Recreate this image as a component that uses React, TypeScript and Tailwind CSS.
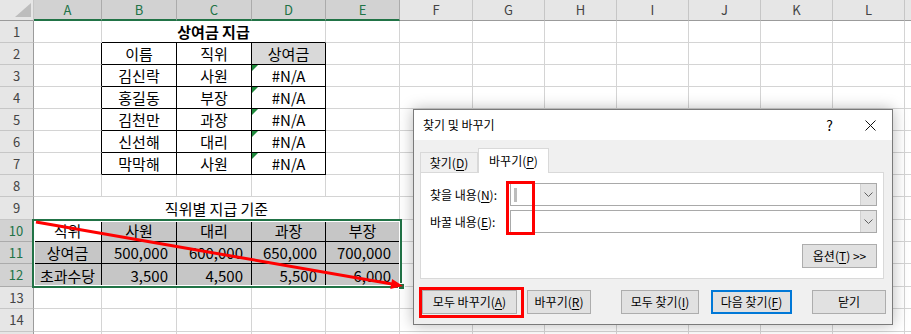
import React from 'react';

type CellSpec = {
  text?: React.ReactNode;
  span?: number;
  r?: boolean;
  b?: boolean;
  align?: 'l' | 'c' | 'r';
  bold?: boolean;
  bg?: string;
  tri?: boolean;
};

// last column (M) only shows a sliver, so it gets no letter
const LETTERS = ['A', 'B', 'C', 'D', 'E', 'F', 'G', 'H', 'I', 'J', 'K', 'L', ''];

const empty = (n: number): CellSpec[] => Array.from({ length: n }, () => ({}));

const people = [
  ['김신락', '사원'],
  ['홍길동', '부장'],
  ['김천만', '과장'],
  ['신선해', '대리'],
  ['막막해', '사원'],
];

const GRAY = 'bg-[#c6c6c6]';

const rows: CellSpec[][] = [
  [{}, { text: '상여금 지급', span: 3, b: true, bold: true, align: 'c' }, ...empty(9)],
  [
    { r: true },
    { text: '이름', r: true, b: true, align: 'c' },
    { text: '직위', r: true, b: true, align: 'c' },
    { text: '상여금', r: true, b: true, align: 'c', bg: 'bg-[#d9d9d9]' },
    ...empty(9),
  ],
  ...people.map(([name, pos]) => [
    { r: true },
    { text: name, r: true, b: true, align: 'c' },
    { text: pos, r: true, b: true, align: 'c' },
    { text: '#N/A', r: true, b: true, align: 'c', tri: true },
    ...empty(9),
  ] as CellSpec[]),
  empty(13),
  [{ text: '직위별 지급 기준', span: 5, b: true, align: 'c' }, ...empty(8)],
  [
    { text: '직위', r: true, b: true, align: 'c' },
    { text: '사원', r: true, b: true, align: 'c', bg: GRAY },
    { text: '대리', r: true, b: true, align: 'c', bg: GRAY },
    { text: '과장', r: true, b: true, align: 'c', bg: GRAY },
    { text: '부장', r: true, b: true, align: 'c', bg: GRAY },
    ...empty(8),
  ],
  [
    { text: '상여금', r: true, b: true, align: 'c', bg: GRAY },
    { text: '500,000', r: true, b: true, align: 'r', bg: GRAY },
    { text: '600,000', r: true, b: true, align: 'r', bg: GRAY },
    { text: '650,000', r: true, b: true, align: 'r', bg: GRAY },
    { text: '700,000', r: true, b: true, align: 'r', bg: GRAY },
    ...empty(8),
  ],
  [
    { text: '초과수당', r: true, b: true, align: 'c', bg: GRAY },
    { text: '3,500', r: true, b: true, align: 'r', bg: GRAY },
    { text: '4,500', r: true, b: true, align: 'r', bg: GRAY },
    { text: '5,500', r: true, b: true, align: 'r', bg: GRAY },
    { text: '6,000', r: true, b: true, align: 'r', bg: GRAY },
    ...empty(8),
  ],
  empty(13),
  empty(13),
  empty(13),
];

function Cell({ c }: { c: CellSpec }) {
  const span = c.span === 3 ? 'col-span-3' : c.span === 5 ? 'col-span-5' : '';
  const rc = c.r ? 'border-r-black' : 'border-r-[#d4d4d4]';
  const bc = c.b ? 'border-b-black' : 'border-b-[#d4d4d4]';
  const al = c.align === 'c' ? 'justify-center' : c.align === 'r' ? 'justify-end pr-[8px]' : 'justify-start pl-[3px]';
  return (
    <div
      className={`relative flex items-center border-r border-b whitespace-nowrap text-[15px] leading-none ${span} ${rc} ${bc} ${al} ${c.bg ?? 'bg-white'} ${c.bold ? 'font-bold' : ''}`}
    >
      {c.tri && (
        <svg className="absolute left-0 top-0" width="6" height="6" viewBox="0 0 6 6">
          <polygon points="0,0 6,0 0,6" fill="#1f8a3c" />
        </svg>
      )}
      {c.text}
    </div>
  );
}

function Sheet() {
  return (
    <div className="grid grid-cols-[34px_68px_75px_75px_74px_74px_73px_72px_72px_72px_72px_72px_72px_72px] grid-rows-[21px_22px_22px_22px_22px_22px_22px_22px_22px_23px_22px_22px_23px_22px_23px_22px]">
      <div className="relative bg-[#e6e6e6] border-r border-b border-r-[#c6c6c6] border-b-[#9b9b9b]">
        <svg className="absolute right-[2px] bottom-[3px]" width="16" height="14" viewBox="0 0 16 14">
          <polygon points="16,0 16,14 0,14" fill="#bdbdbd" />
        </svg>
      </div>
      {LETTERS.map((l, i) =>
        i < 5 ? (
          <div
            key={i}
            className="flex items-center justify-center bg-[#d2d2d2] border-r border-r-[#ababab] border-b-2 border-b-[#217346] text-[13px] text-[#217346]"
          >
            {l}
          </div>
        ) : (
          <div
            key={i}
            className="flex items-center justify-center bg-[#e6e6e6] border-r border-r-[#c6c6c6] border-b border-b-[#9b9b9b] text-[13px] text-[#444]"
          >
            {l}
          </div>
        )
      )}
      {rows.map((row, ri) => (
        <React.Fragment key={ri}>
          {ri >= 9 && ri <= 11 ? (
            <div className="flex items-center justify-center bg-[#d2d2d2] border-r-2 border-r-[#217346] border-b border-b-[#ababab] text-[13px] text-[#217346]">
              {ri + 1}
            </div>
          ) : (
            <div className="flex items-center justify-center bg-[#e6e6e6] border-r border-r-[#9b9b9b] border-b border-b-[#c6c6c6] text-[13px] text-[#444]">
              {ri < 14 ? ri + 1 : ''}
            </div>
          )}
          {row.map((c, ci) => (
            <Cell key={ci} c={c} />
          ))}
        </React.Fragment>
      ))}
    </div>
  );
}

function Selection() {
  return (
    <>
      <div className="absolute left-[32px] top-[219px] w-[370px] h-[69px] border-2 border-[#217346] shadow-[inset_0_0_0_1px_#ffffff]" />
      <div className="absolute left-[398px] top-[283px] w-[7px] h-[7px] bg-[#217346] border border-white" />
    </>
  );
}

function Arrow() {
  return (
    <svg className="absolute left-0 top-0 pointer-events-none" width="911" height="334" viewBox="0 0 911 334">
      <line x1="36" y1="222" x2="392" y2="284" stroke="#ff0000" strokeWidth="3" />
      <polygon points="403,286 390.3,288.9 392.1,279" fill="#ff0000" />
    </svg>
  );
}

function Acc({ k }: { k: string }) {
  return (
    <>
      (<span className="underline underline-offset-2">{k}</span>)
    </>
  );
}

function Combo({ caret }: { caret?: boolean }) {
  return (
    <div className="flex flex-1 h-[23px] border border-[#a9a9a9] bg-white">
      <div className="flex-1 flex items-center pl-[3px]">
        {caret && <div className="w-[3px] h-[14px] bg-[#bdbdbd]" />}
      </div>
      <div className="w-[16px] flex items-center justify-center bg-[#e3e3e3] border-l border-[#d0d0d0]">
        <svg width="9" height="5" viewBox="0 0 9 5">
          <polyline points="0.5,0.5 4.5,4.5 8.5,0.5" fill="none" stroke="#606060" strokeWidth="1" />
        </svg>
      </div>
    </div>
  );
}

function Btn({ children, w, blue }: { children: React.ReactNode; w: string; blue?: boolean }) {
  return (
    <div
      className={`flex items-center justify-center h-[24px] bg-[#e1e1e1] text-[12px] ${w} ${
        blue ? 'border-2 border-[#0078d7]' : 'border border-[#adadad]'
      }`}
    >
      {children}
    </div>
  );
}

function Dialog() {
  return (
    <div className="absolute left-[413px] top-[109px] w-[480px] h-[216px] flex flex-col bg-[#f0f0f0] border border-[#7a7a7a] shadow-[0_0_14px_rgba(0,0,0,0.28)] text-[12px] text-black">
      <div className="h-[30px] bg-white flex items-center pl-[9px] pr-[16px]">
        <span>찾기 및 바꾸기</span>
        <span className="ml-auto mr-[32px] text-[14px]">?</span>
        <svg width="11" height="11" viewBox="0 0 11 11">
          <path d="M0.5 0.5 L10.5 10.5 M10.5 0.5 L0.5 10.5" stroke="#111" strokeWidth="1" />
        </svg>
      </div>
      <div className="flex items-end h-[32px] pl-[6px]">
        <div className="w-[58px] h-[20px] flex items-center justify-center border border-b-0 border-[#d9d9d9]">
          찾기<Acc k="D" />
        </div>
        <div className="relative z-10 -mb-px w-[71px] h-[25px] flex items-center justify-center bg-white border border-b-0 border-[#d9d9d9]">
          바꾸기<Acc k="P" />
        </div>
      </div>
      <div className="mx-[6px] mr-[8px] h-[107px] bg-white border border-[#d9d9d9] pl-[9px] pr-[6px] pt-[10px] flex flex-col">
        <div className="flex items-center">
          <span className="w-[80px]">
            찾을 내용<Acc k="N" />:
          </span>
          <Combo caret />
        </div>
        <div className="flex items-center mt-[4px]">
          <span className="w-[80px]">
            바꿀 내용<Acc k="E" />:
          </span>
          <Combo />
        </div>
        <div className="flex justify-end mt-[11px]">
          <Btn w="w-[75px]">
            옵션<Acc k="T" />&nbsp;&gt;&gt;
          </Btn>
        </div>
      </div>
      <div className="flex items-center mt-[11px] pl-[8px]">
        <Btn w="w-[95px]">
          모두 바꾸기<Acc k="A" />
        </Btn>
        <div className="ml-[10px]">
          <Btn w="w-[64px]">
            바꾸기<Acc k="R" />
          </Btn>
        </div>
        <div className="ml-[30px]">
          <Btn w="w-[78px]">
            모두 찾기<Acc k="I" />
          </Btn>
        </div>
        <div className="ml-[12px]">
          <Btn w="w-[81px]" blue>
            다음 찾기<Acc k="F" />
          </Btn>
        </div>
        <div className="ml-[20px]">
          <Btn w="w-[74px]">닫기</Btn>
        </div>
      </div>
      <div className="absolute left-[92px] top-[71px] w-[29px] h-[54px] border-[3px] border-[#ff0000]" />
      <div className="absolute left-[5px] top-[177px] w-[105px] h-[31px] border-[3px] border-[#ff0000]" />
    </div>
  );
}

export default function App() {
  return (
    <div className="relative w-[911px] h-[334px] overflow-hidden bg-white font-['Noto_Sans_CJK_KR','Noto_Sans',sans-serif] text-black">
      <Sheet />
      <Selection />
      <Arrow />
      <Dialog />
    </div>
  );
}
